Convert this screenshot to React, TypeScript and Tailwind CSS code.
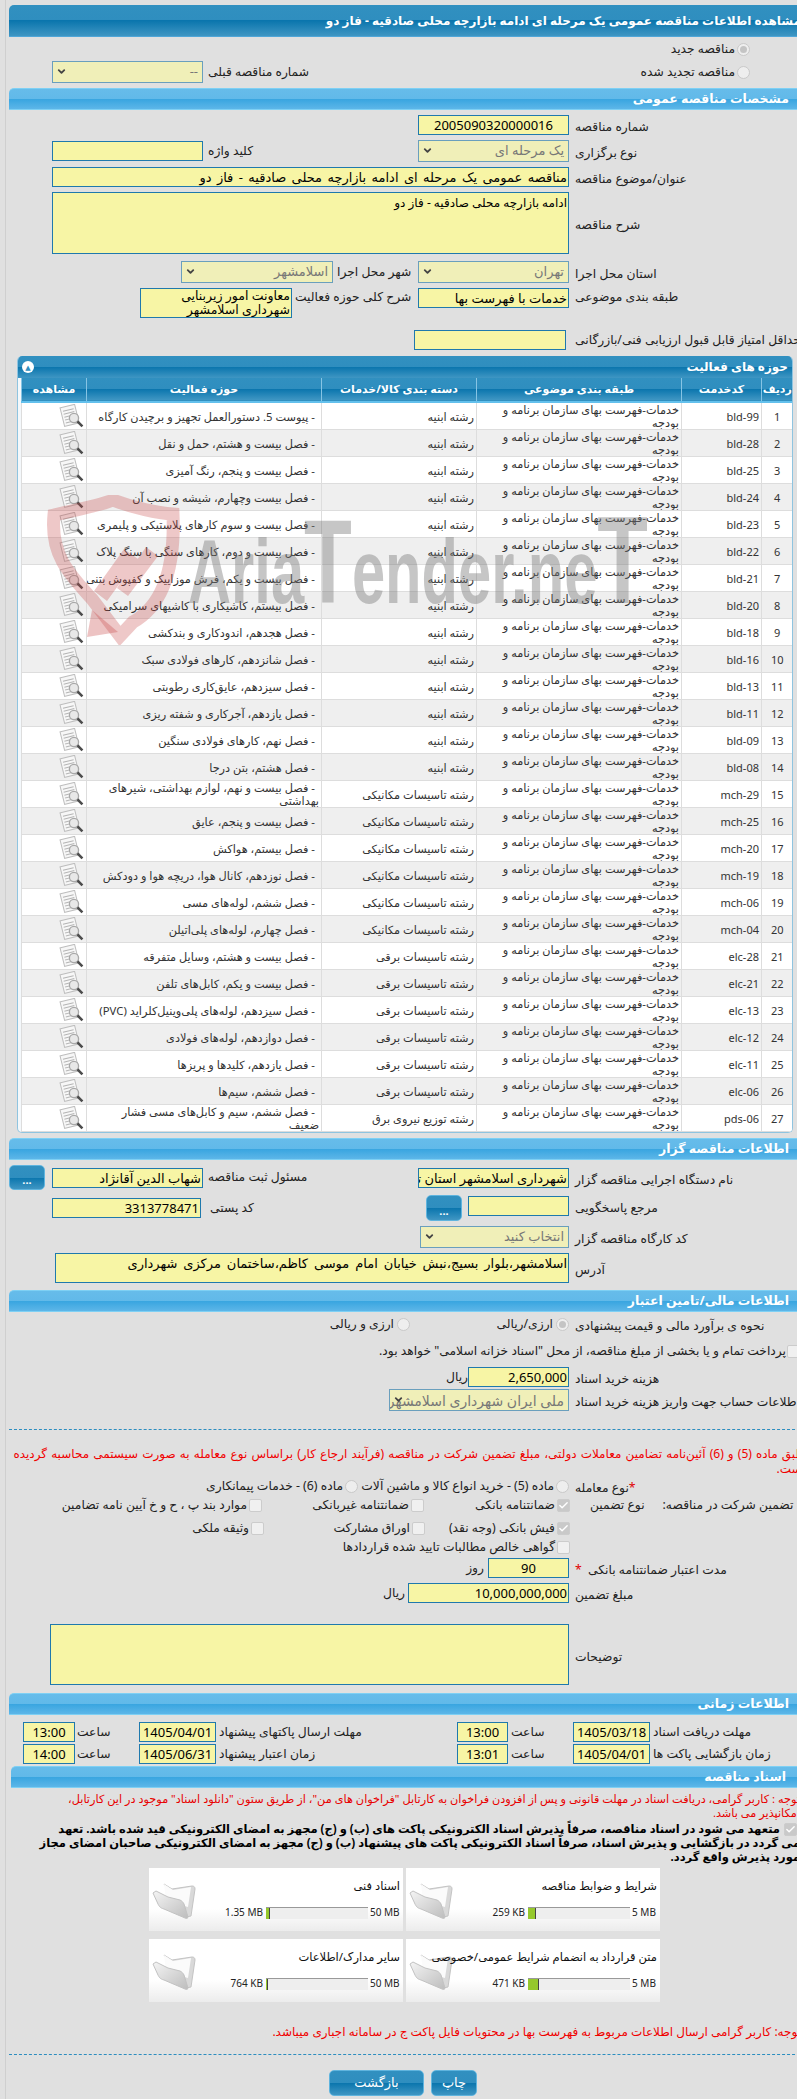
import type { FC, ReactNode } from 'react';
import { Check, ChevronDown } from 'lucide-react';
import clsx from 'clsx';

const darkBar = "bg-[linear-gradient(#3190c0_0%,#2f8ebf_50%,#0a75ad_50%,#3f96c3_100%)]";
const lightBar = "bg-[linear-gradient(#66bcea_0%,#61b9e9_50%,#38a5e0_50%,#5db6e8_100%)]";

const Section: FC<{ title: string; className?: string }> = ({ title, className }) => (
  <div className={clsx("h-[22px] ml-[9px] rounded-t-[5px] border-t border-b border-[#7ed0f4] flex items-center justify-end pr-[16px] text-white font-bold text-[12.5px]", lightBar, className)}>
    <span dir="rtl">{title}</span>
  </div>
);

const Input: FC<{ value?: string; className?: string; center?: boolean }> = ({ value, className, center }) => (
  <div dir="rtl" className={clsx("h-[20px] shrink-0 bg-[#f7f5a5] border border-[#1f79ad] text-black text-[13px] leading-[18px] overflow-hidden whitespace-nowrap px-px", center && "text-center", className)}>
    {value}
  </div>
);

const Select: FC<{ value?: string; className?: string }> = ({ value, className }) => (
  <div className={clsx("relative h-[22px] shrink-0 bg-[#f0efb8] border border-[#6a9fbd] flex items-center justify-end pr-[4px] text-[#777] text-[13px] overflow-hidden", className)}>
    <span dir="rtl" className="whitespace-nowrap">{value}</span>
    <ChevronDown size={11} strokeWidth={4} className="absolute left-[3px] top-[4px] text-[#444]" />
  </div>
);

const Label: FC<{ children: ReactNode; className?: string }> = ({ children, className }) => (
  <span dir="rtl" className={clsx("inline-block whitespace-nowrap text-left text-[12.3px] text-[#222]", className)}>{children}</span>
);

// field row: everything left of x=575 goes in the first cell, the caption after it
const Row: FC<{ label?: ReactNode; className?: string; cell?: string; children?: ReactNode }> = ({ label, className, cell, children }) => (
  <div className={clsx("flex items-center ml-[9px]", className)}>
    <div className={clsx("w-[566px] shrink-0 flex items-center pr-[6px]", cell ?? "justify-end")}>{children}</div>
    <div className="flex-1 whitespace-nowrap">{label && <Label>{label}</Label>}</div>
  </div>
);

const Radio: FC<{ on?: boolean; className?: string }> = ({ on, className }) => (
  <span className={clsx("inline-flex items-center justify-center w-[13px] h-[13px] rounded-full border border-[#c9c9c9] bg-[#eeeeee] shrink-0", className)}>
    {on && <span className="w-[7px] h-[7px] rounded-full bg-[#c4c4c4]" />}
  </span>
);

const Box: FC<{ on?: boolean; className?: string }> = ({ on, className }) => (
  <span className={clsx("inline-flex items-center justify-center w-[13px] h-[13px] rounded-[2px] border border-[#cccccc] shrink-0", on ? "bg-[#c9c9c9]" : "bg-[#f0f0f0]", className)}>
    {on && <Check size={11} strokeWidth={3} className="text-white" />}
  </span>
);

const DotsButton: FC<{ className?: string }> = ({ className }) => (
  <div className={clsx("w-[36px] rounded-[5px] border border-[#5fb4de] flex items-end justify-center pb-[4px] text-white text-[11px] font-bold leading-none shrink-0", darkBar, className)}>...</div>
);

const ViewIcon = () => (
  <svg width="25" height="24" viewBox="0 0 25 24" className="block">
    <g transform="rotate(-14 10 11)">
      <rect x="3" y="2" width="15" height="19" fill="#f7f7f7" stroke="#bdbdbd" />
      <path d="M5 6h11M5 9h11M5 12h6M5 15h5M5 18h6" stroke="#b5b5b5" strokeWidth="1" />
    </g>
    <circle cx="15" cy="14" r="4.6" fill="#e6e6e6" fillOpacity=".9" stroke="#a8a8a8" strokeWidth="1.3" />
    <path d="M18.4 17.4l5 5" stroke="#4c4c4c" strokeWidth="2.6" />
  </svg>
);

const FolderIcon = () => (
  <svg width="44" height="38" viewBox="0 0 44 38" className="block shrink-0">
    <defs>
      <linearGradient id="fold" x1="0" y1="0" x2="1" y2="1">
        <stop offset="0" stopColor="#f4f4f4" />
        <stop offset="1" stopColor="#bdbdbd" />
      </linearGradient>
    </defs>
    <path d="M12 3l8 5 20-3c2 0 3 1 3 3l-4 27-5 1z" fill="#d9d9d9" stroke="#c4c4c4" />
    <path d="M12 3l9 6 18-3-3 20-22-6z" fill="#fbfbfb" />
    <path d="M1 12l3-2 12 6 12 3c2 1 3 2 4 4l4 13c0 1-1 2-3 1L12 28C8 27 7 25 6 23z" fill="url(#fold)" stroke="#c2c2c2" />
  </svg>
);

const Card: FC<{ title: string; size: string; max: string; fill: string; wide?: boolean }> = ({ title, size, max, fill, wide }) => (
  <div className="w-[254px] h-[63px] bg-[linear-gradient(#ffffff_0%,#ffffff_65%,#ececec_100%)] flex items-center pl-[3px] pr-[3px] shrink-0">
    <FolderIcon />
    <div className="flex-1 min-w-0 h-full flex flex-col pt-[11px] gap-[12px]">
      <div dir="rtl" className="text-[11.5px] leading-[14px] text-[#111] whitespace-nowrap">{title}</div>
      <div className="flex items-center justify-end text-[10px] text-[#222]">
        <span className="whitespace-nowrap mr-[3px]">{size}</span>
        <div className="w-[102px] h-[12px] bg-[#eeeeee] border-t border-[#999999] flex shrink-0">
          <div className={clsx("bg-[#95c82c] border-r border-[#444]", fill)} />
        </div>
        <span className={clsx("whitespace-nowrap ml-[2px]", wide ? "w-[30px]" : "w-[25px]")}>{max}</span>
      </div>
    </div>
  </div>
);

const service = "خدمات-فهرست بهای سازمان برنامه و\nبودجه";
const rows: [string, string, string][] = [
  ["bld-99", "رشته ابنیه", "- پیوست 5. دستورالعمل تجهیز و برچیدن کارگاه"],
  ["bld-28", "رشته ابنیه", "- فصل بیست و هشتم، حمل و نقل"],
  ["bld-25", "رشته ابنیه", "- فصل بیست و پنجم، رنگ آمیزی"],
  ["bld-24", "رشته ابنیه", "- فصل بیست وچهارم، شیشه و نصب آن"],
  ["bld-23", "رشته ابنیه", "- فصل بیست و سوم کارهای پلاستیکی و پلیمری"],
  ["bld-22", "رشته ابنیه", "- فصل بیست و دوم، کارهای سنگی با سنگ پلاک"],
  ["bld-21", "رشته ابنیه", "- فصل بیست و یکم، فرش موزاییک و کفپوش بتنی"],
  ["bld-20", "رشته ابنیه", "- فصل بیستم، کاشیکاری با کاشیهای سرامیکی"],
  ["bld-18", "رشته ابنیه", "- فصل هجدهم، اندودکاری و بندکشی"],
  ["bld-16", "رشته ابنیه", "- فصل شانزدهم، کارهای فولادی سبک"],
  ["bld-13", "رشته ابنیه", "- فصل سیزدهم، عایق‌کاری رطوبتی"],
  ["bld-11", "رشته ابنیه", "- فصل یازدهم، آجرکاری و شفته ریزی"],
  ["bld-09", "رشته ابنیه", "- فصل نهم، کارهای فولادی سنگین"],
  ["bld-08", "رشته ابنیه", "- فصل هشتم، بتن درجا"],
  ["mch-29", "رشته تاسیسات مکانیکی", "- فصل بیست و نهم، لوازم بهداشتی، شیرهای\nبهداشتی"],
  ["mch-25", "رشته تاسیسات مکانیکی", "- فصل بیست و پنجم، عایق"],
  ["mch-20", "رشته تاسیسات مکانیکی", "- فصل بیستم، هواکش"],
  ["mch-19", "رشته تاسیسات مکانیکی", "- فصل نوزدهم، کانال هوا، دریچه هوا و دودکش"],
  ["mch-06", "رشته تاسیسات مکانیکی", "- فصل ششم، لوله‌های مسی"],
  ["mch-04", "رشته تاسیسات مکانیکی", "- فصل چهارم، لوله‌های پلی‌اتیلن"],
  ["elc-28", "رشته تاسیسات برقی", "- فصل بیست و هشتم، وسایل متفرقه"],
  ["elc-21", "رشته تاسیسات برقی", "- فصل بیست و یکم، کابل‌های تلفن"],
  ["elc-13", "رشته تاسیسات برقی", "- فصل سیزدهم، لوله‌های پلی‌وینیل‌کلراید (PVC)"],
  ["elc-12", "رشته تاسیسات برقی", "- فصل دوازدهم، لوله‌های فولادی"],
  ["elc-11", "رشته تاسیسات برقی", "- فصل یازدهم، کلیدها و پریزها"],
  ["elc-06", "رشته تاسیسات برقی", "- فصل ششم، سیم‌ها"],
  ["pds-06", "رشته توزیع نیروی برق", "- فصل ششم، سیم و کابل‌های مسی فشار\nضعیف"],
];

const th = "font-bold text-white text-[11px] border-l border-[#86c4e4] text-center";
const td = "border-l border-b border-[#dddddd] text-[#333] text-[11.3px] leading-[13px] align-middle p-0 px-[2px] whitespace-pre overflow-hidden";

const Watermark = () => (
  <svg width="650" height="150" viewBox="0 0 650 150" className="absolute left-[40px] top-[495px] pointer-events-none">
    <path d="M14 20C45 13 65 9 73 5c20 8 45 13 60 14 2 50-8 90-40 108L80 141 52 104C30 80 10 60 14 20z" fill="none" stroke="#c84a4a" strokeOpacity=".3" strokeWidth="13" />
    <path d="M52 115l-5 27 31-5z" fill="#c84a4a" fillOpacity=".33" />
    <path d="M54 96l30-42 14 10-6 8 14-20 12 9-30 40-11-8 6-9-16 22z" fill="#c84a4a" fillOpacity=".3" />
    <text x="148" y="108" textLength="460" lengthAdjust="spacingAndGlyphs" fontFamily="'Liberation Sans',sans-serif" fontWeight="700" fontSize="90" fill="#777777" fillOpacity=".42">
      Aria<tspan fontSize="118">T</tspan>ender.ne<tspan fontSize="125">T</tspan>
    </text>
  </svg>
);

export default function App() {
  return (
    <div className="relative w-[797px] h-[2099px] overflow-hidden bg-[#e0e0e0] font-['Noto_Sans','DejaVu_Sans',sans-serif]">
      <div className="absolute left-[5px] top-0 bottom-0 w-px bg-[#cfcfcf]" />
      <div className="w-[805px] pt-[5px]">
        <div className={clsx("h-[32px] ml-[9px] rounded-t-[5px] border-b border-[#4fa6d8] flex items-center justify-end pr-[4px] text-white font-bold text-[12px]", darkBar)}>
          <span dir="rtl" className="whitespace-nowrap">مشاهده اطلاعات مناقصه عمومی یک مرحله ای ادامه بازارچه محلی صادقیه - فاز دو</span>
        </div>

        <div className="h-[24px] ml-[9px] flex items-center justify-end pr-[55px] gap-[2px]">
          <Label>مناقصه جدید</Label>
          <Radio on />
        </div>
        <div className="h-[22px] ml-[9px] flex items-center">
          <Select value="--" className="w-[151px] ml-[43px]" />
          <Label className="ml-[5px]">شماره مناقصه قبلی</Label>
          <div className="flex-1 flex items-center justify-end pr-[55px] gap-[2px]">
            <Label>مناقصه تجدید شده</Label>
            <Radio />
          </div>
        </div>

        <Section title="مشخصات مناقصه عمومی" className="mt-[5px]" />

        <Row label="شماره مناقصه" className="mt-[5px] h-[20px]">
          <Input value="2005090320000016" center className="w-[151px]" />
        </Row>
        <Row label="نوع برگزاری" className="mt-[5px] h-[22px]" cell="justify-between pl-[43px]">
          <div className="flex items-center">
            <Input className="w-[151px]" />
            <Label className="ml-[5px]">کلید واژه</Label>
          </div>
          <Select value="یک مرحله ای" className="w-[151px]" />
        </Row>
        <Row label="عنوان/موضوع مناقصه" className="mt-[5px] h-[20px]">
          <Input value="مناقصه عمومی یک مرحله ای ادامه بازارچه محلی صادقیه - فاز دو" className="w-[517px] [word-spacing:2px]" />
        </Row>
        <Row label="شرح مناقصه" className="mt-[5px] h-[62px]">
          <Input value="ادامه بازارچه محلی صادقیه - فاز دو" className="w-[517px] !h-[62px] !leading-[20px] !text-[12px]" />
        </Row>
        <Row label="استان محل اجرا" className="mt-[7px] h-[22px]">
          <Select value="اسلامشهر" className="w-[152px]" />
          <Label className="w-[81px] ml-[4px]">شهر محل اجرا</Label>
          <Select value="تهران" className="w-[151px]" />
        </Row>
        <div className="mt-[5px] ml-[9px] h-[30px] flex items-start">
          <div className="w-[566px] shrink-0 flex items-start justify-end pr-[6px]">
            <div dir="rtl" className="w-[152px] h-[30px] shrink-0 bg-[#f7f5a5] border border-[#1f79ad] text-black text-[12.5px] leading-[14px] px-px overflow-hidden">معاونت امور زیربنایی شهرداری اسلامشهر</div>
            <Label className="w-[123px] ml-[3px]">شرح کلی حوزه فعالیت</Label>
            <Input value="خدمات با فهرست بها" className="w-[151px]" />
          </div>
          <Label>طبقه بندی موضوعی</Label>
        </div>
        <div className="mt-[12px] ml-[9px] h-[20px] flex items-center">
          <div className="w-[566px] shrink-0 flex justify-end pr-[9px]">
            <Input className="w-[152px]" />
          </div>
          <Label>حداقل امتیاز قابل قبول ارزیابی فنی/بازرگانی</Label>
        </div>

        <div className="mt-[6px] ml-[17px] w-[776px] border-x border-b border-[#8fc4e0] rounded-[5px] bg-[#f4f8fb] overflow-hidden">
          <div className={clsx("h-[22px] flex items-center justify-between pl-[4px] pr-[4px] text-white font-bold text-[12px]", darkBar)}>
            <span className="w-[12px] h-[12px] rounded-full bg-white flex items-center justify-center text-[#2f8ebf] text-[7px] leading-none">▲</span>
            <span dir="rtl">حوزه های فعالیت</span>
          </div>
          <table className="ml-[3px] w-[771px] table-fixed border-collapse bg-white">
            <colgroup>
              <col className="w-[65px]" />
              <col className="w-[235px]" />
              <col className="w-[155px]" />
              <col className="w-[205px]" />
              <col className="w-[80px]" />
              <col className="w-[31px]" />
            </colgroup>
            <thead>
              <tr className={clsx("h-[24px] border-b-2 border-[#63c0ec]", darkBar)}>
                <th className={th}>مشاهده</th>
                <th className={th}>حوزه فعالیت</th>
                <th className={th}>دسته بندی کالا/خدمات</th>
                <th className={th}>طبقه بندی موضوعی</th>
                <th className={th}>کدخدمت</th>
                <th className={th}>ردیف</th>
              </tr>
            </thead>
            <tbody>
              {rows.map(([code, group, field], i) => (
                <tr key={code} className={clsx("h-[27px]", i % 2 === 1 ? "bg-[#efefef]" : "bg-white")}>
                  <td className={td}>
                    <div className="flex justify-end"><ViewIcon /></div>
                  </td>
                  <td dir="rtl" className={clsx(td, "indent-[4px]")}>{field}</td>
                  <td dir="rtl" className={td}>{group}</td>
                  <td dir="rtl" className={td}>{service}</td>
                  <td className={clsx(td, "text-right !text-[11px]")}>{code}</td>
                  <td className={clsx(td, "text-center !text-[11px]")}>{i + 1}</td>
                </tr>
              ))}
            </tbody>
          </table>
        </div>

        <Section title="اطلاعات مناقصه گزار" className="mt-[5px]" />

        <Row label="نام دستگاه اجرایی مناقصه گزار" className="mt-[5px] h-[25px]" cell="justify-between">
          <div className="flex items-center">
            <DotsButton className="h-[25px]" />
            <Input value="شهاب الدین آقانژاد" className="w-[151px] ml-[7px]" />
            <Label className="ml-[5px]">مسئول ثبت مناقصه</Label>
          </div>
          <Input value="شهرداری اسلامشهر استان تهران" className="w-[151px]" />
        </Row>
        <div className="mt-[5px] ml-[9px] h-[26px] flex items-start">
          <div className="w-[566px] shrink-0 flex items-start pr-[6px] pl-[43px]">
            <Input value="3313778471" className="w-[149px] mt-[3px]" />
            <Label className="ml-[9px] mt-[4px]">کد پستی</Label>
            <div className="flex-1 flex justify-end items-start gap-[6px]">
              <DotsButton className="h-[26px]" />
              <Input className="w-[101px] mt-px" />
            </div>
          </div>
          <Label className="mt-[4px]">مرجع پاسخگویی</Label>
        </div>
        <Row label="کد کارگاه مناقصه گزار" className="mt-[5px] h-[22px]">
          <Select value="انتخاب کنید" className="w-[149px]" />
        </Row>
        <Row label="آدرس" className="mt-[5px] h-[30px]">
          <Input value="اسلامشهر،بلوار بسیج،نبش خیابان امام موسی کاظم،ساختمان مرکزی شهرداری" className="w-[514px] !h-[30px] [word-spacing:2.5px]" />
        </Row>

        <Section title="اطلاعات مالی/تامین اعتبار" className="mt-[7px]" />

        <Row label="نحوه ی برآورد مالی و قیمت پیشنهادی" className="mt-[2px] h-[20px]">
          <Label>ارزی و ریالی</Label>
          <Radio className="ml-[3px]" />
          <div className="w-[159px] shrink-0 flex items-center justify-end gap-[3px]">
            <Label>ارزی/ریالی</Label>
            <Radio on />
          </div>
        </Row>
        <div className="mt-[8px] h-[18px] ml-[9px] flex items-center justify-end pr-[5px] gap-[1px]">
          <Label>پرداخت تمام و یا بخشی از مبلغ مناقصه، از محل "اسناد خزانه اسلامی" خواهد بود.</Label>
          <Box />
        </div>
        <Row label="هزینه خرید اسناد" className="mt-[7px] h-[20px]">
          <Label>ریال</Label>
          <Input value="2,650,000" className="w-[101px]" />
        </Row>
        <Row label="اطلاعات حساب جهت واریز هزینه خرید اسناد" className="mt-[2px] h-[22px]">
          <Select value="ملی ایران شهرداری اسلامشهر" className="w-[180px] !text-[14px]" />
        </Row>

        <div className="mt-[18px] ml-[9px] border-t border-dashed border-[#2d8dbf]" />

        <div dir="rtl" className="mt-[16px] w-[803px] ml-[2px] text-[#f00000] text-[12px] [word-spacing:1px] leading-[15px] whitespace-nowrap">
          <div>طبق ماده (5) و (6) آئین‌نامه تضامین معاملات دولتی، مبلغ تضمین شرکت در مناقصه (فرآیند ارجاع کار) براساس نوع معامله به صورت سیستمی محاسبه گردیده</div>
          <div>است.</div>
        </div>

        <Row className="mt-px h-[18px]" label={<><span className="text-[#e00000]">*</span>نوع معامله</>}>
          <Label>ماده (6) - خدمات پیمانکاری</Label>
          <Radio className="ml-[2px]" />
          <div className="w-[211px] shrink-0 flex items-center justify-end gap-[2px]">
            <Label>ماده (5) - خرید انواع کالا و ماشین آلات</Label>
            <Radio />
          </div>
        </Row>
        <div className="mt-px h-[18px] ml-[9px] flex items-center">
          <div className="w-[253px] shrink-0 flex items-center justify-end gap-[2px]">
            <Label>موارد بند پ ، ح و خ آیین نامه تضامین</Label>
            <Box />
          </div>
          <div className="w-[162px] shrink-0 flex items-center justify-end gap-[2px]">
            <Label>ضمانتنامه غیربانکی</Label>
            <Box />
          </div>
          <div className="w-[146px] shrink-0 flex items-center justify-end gap-[2px]">
            <Label>ضمانتنامه بانکی</Label>
            <Box on />
          </div>
          <Label className="ml-[20px]">نوع تضمین</Label>
          <Label className="ml-[18px]">تضمین شرکت در مناقصه:</Label>
        </div>
        <div className="mt-[5px] h-[18px] ml-[9px] flex items-center">
          <div className="w-[255px] shrink-0 flex items-center justify-end gap-[2px]">
            <Label>وثیقه ملکی</Label>
            <Box />
          </div>
          <div className="w-[161px] shrink-0 flex items-center justify-end gap-[2px]">
            <Label>اوراق مشارکت</Label>
            <Box />
          </div>
          <div className="w-[145px] shrink-0 flex items-center justify-end gap-[2px]">
            <Label>فیش بانکی (وجه نقد)</Label>
            <Box on />
          </div>
        </div>
        <div className="mt-px h-[18px] ml-[9px] flex items-center">
          <div className="w-[561px] shrink-0 flex items-center justify-end gap-[2px]">
            <Label>گواهی خالص مطالبات تایید شده قراردادها</Label>
            <Box />
          </div>
        </div>
        <Row className="mt-[2px] h-[20px]" label={<>مدت اعتبار ضمانتنامه بانکی <span className="text-[#e00000] mr-[3px]">*</span></>}>
          <Label className="mr-[4px]">روز</Label>
          <Input value="90" center className="w-[81px]" />
        </Row>
        <Row label="مبلغ تضمین" className="mt-[5px] h-[20px]">
          <Label className="mr-[3px]">ریال</Label>
          <Input value="10,000,000,000" className="w-[161px]" />
        </Row>
        <Row label="توضیحات" className="mt-[21px] h-[61px]">
          <Input className="w-[519px] !h-[61px]" />
        </Row>

        <Section title="اطلاعات زمانی" className="mt-[8px]" />

        <div className="mt-[7px] ml-[23px] flex flex-col gap-[2px]">
          {[
            ["13:00", "1405/04/01", "مهلت ارسال پاکتهای پیشنهاد", "13:00", "1405/03/18", "مهلت دریافت اسناد"],
            ["14:00", "1405/06/31", "زمان اعتبار پیشنهاد", "13:01", "1405/04/01", "زمان بازگشایی پاکت ها"],
          ].map((r) => (
            <div key={r[2]} className="flex items-center h-[20px]">
              <Input value={r[0]} center className="w-[52px]" />
              <Label className="ml-[2px] w-[62px]">ساعت</Label>
              <Input value={r[1]} center className="w-[77px]" />
              <Label className="ml-[3px] w-[238px]">{r[2]}</Label>
              <Input value={r[3]} center className="w-[51px]" />
              <Label className="ml-[3px] w-[62px]">ساعت</Label>
              <Input value={r[4]} center className="w-[77px]" />
              <Label className="ml-[3px]">{r[5]}</Label>
            </div>
          ))}
        </div>

        <Section title="اسناد مناقصه" className="mt-[2px] !ml-[11px] !pr-[19px]" />

        <div dir="rtl" className="mt-[4px] w-[800px] text-[#e80000] text-[11.3px] leading-[14px] whitespace-nowrap">
          <div>توجه : کاربر گرامی، دریافت اسناد در مهلت قانونی و پس از افزودن فراخوان به کارتابل "فراخوان های من"، از طریق ستون "دانلود اسناد" موجود در این کارتابل،</div>
          <div>امکانپذیر می باشد.</div>
        </div>
        <div dir="rtl" className="mt-[2px] w-[800px] text-black font-bold text-[11.5px] leading-[14px] whitespace-nowrap">
          <div className="flex items-center gap-[4px] pr-[3px]">
            <Box on />
            <span>متعهد می شود در اسناد مناقصه، صرفاً پذیرش اسناد الکترونیکی پاکت های (ب) و (ج) مجهز به امضای الکترونیکی قید شده باشد. تعهد</span>
          </div>
          <div>می گردد در بازگشایی و پذیرش اسناد، صرفاً اسناد الکترونیکی پاکت های پیشنهاد (ب) و (ج) مجهز به امضای الکترونیکی صاحبان امضای مجاز</div>
          <div>مورد پذیرش واقع گردد.</div>
        </div>

        <div className="mt-[4px] ml-[149px] grid grid-cols-[254px_254px] gap-x-[3px] gap-y-[8px]">
          <Card title="اسناد فنی" size="1.35 MB" max="50 MB" fill="w-[4px]" wide />
          <Card title="شرایط و ضوابط مناقصه" size="259 KB" max="5 MB" fill="w-[8px]" />
          <Card title="سایر مدارک/اطلاعات" size="764 KB" max="50 MB" fill="w-[2px]" wide />
          <Card title="متن قرارداد به انضمام شرایط عمومی/خصوصی" size="471 KB" max="5 MB" fill="w-[11px]" />
        </div>

        <div dir="rtl" className="mt-[22px] w-[801px] text-[#f00000] text-[12px] leading-[16px] whitespace-nowrap">
          توجه: کاربر گرامی ارسال اطلاعات مربوط به فهرست بها در محتویات فایل پاکت ج در سامانه اجباری میباشد.
        </div>

        <div className="mt-[14px] ml-[9px] border-t border-dashed border-[#2d8dbf]" />

        <div className="mt-[15px] ml-[329px] flex gap-[7px]">
          <div className={clsx("w-[95px] h-[26px] rounded-[5px] border border-[#5fb4de] flex items-center justify-center text-white text-[13px]", darkBar)}>بازگشت</div>
          <div className={clsx("w-[46px] h-[26px] rounded-[5px] border border-[#5fb4de] flex items-center justify-center text-white text-[13px]", darkBar)}>چاپ</div>
        </div>
      </div>
      <Watermark />
    </div>
  );
}
